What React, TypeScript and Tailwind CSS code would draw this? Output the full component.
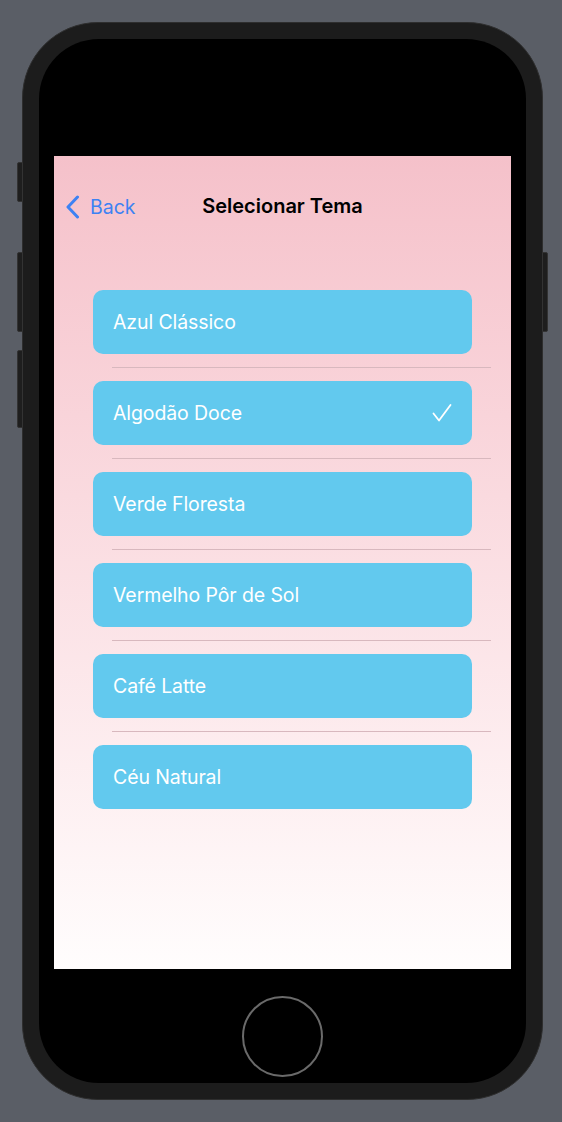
import React from "react";

const themes = [
  { name: "Azul Clássico", selected: false },
  { name: "Algodão Doce", selected: true },
  { name: "Verde Floresta", selected: false },
  { name: "Vermelho Pôr de Sol", selected: false },
  { name: "Café Latte", selected: false },
  { name: "Céu Natural", selected: false },
];

export default function App() {
  return (
    <div
      className="w-[562px] h-[1122px] bg-[#5a5e66] flex items-start justify-start pl-[22px] pt-[22px]"
      style={{ fontFamily: "Inter, 'Noto Sans', sans-serif" }}
    >
      <div className="relative w-[521px] h-[1078px]">
        {/* side buttons */}
        <div className="absolute left-[-5px] top-[140px] w-[6px] h-[40px] rounded-l-[2px] bg-[#1e1e1e] border border-[#333]" />
        <div className="absolute left-[-5px] top-[230px] w-[6px] h-[80px] rounded-l-[2px] bg-[#1e1e1e] border border-[#333]" />
        <div className="absolute left-[-5px] top-[328px] w-[6px] h-[78px] rounded-l-[2px] bg-[#1e1e1e] border border-[#333]" />
        <div className="absolute right-[-5px] top-[230px] w-[6px] h-[80px] rounded-r-[2px] bg-[#1e1e1e] border border-[#333]" />
        <div className="w-full h-full rounded-[76px] bg-[#1c1c1c] border border-[#2e2e2e] p-[16px]">
          <div className="w-full h-full rounded-[60px] bg-black flex flex-col items-center pt-[117px]">
            <div className="w-[457px] h-[813px] bg-gradient-to-b from-[#f5c1ca] to-[#fffdfd] flex flex-col">
              {/* nav bar */}
              <div className="relative h-[103px] pt-[38px]">
                <div className="absolute left-[12px] top-[39px] flex items-center gap-[11px] text-[#3d82f3]">
                  <svg width="13" height="24" viewBox="0 0 13 24" fill="none">
                    <path d="M11.5 2 L2 12 L11.5 22" stroke="#3d82f3" strokeWidth="3" strokeLinecap="round" strokeLinejoin="round" />
                  </svg>
                  <span className="text-[19.5px] leading-[24px]">Back</span>
                </div>
                <div className="text-center text-[20px] leading-[24px] font-semibold text-black">
                  Selecionar Tema
                </div>
              </div>
              {/* list */}
              <div className="flex flex-col pt-[31px]">
                {themes.map((t, i) => (
                  <div key={t.name} className="flex flex-col">
                    <div className="pl-[39px] pr-[39px]">
                      <div className="h-[64px] rounded-[10px] bg-[#62c9ee] flex items-center justify-between pl-[20px] pr-[20px]">
                        <span className="text-white text-[19.5px] leading-[24px] tracking-[-0.1px]">{t.name}</span>
                        {t.selected && (
                          <svg width="20" height="20" viewBox="0 0 20 20" fill="none">
                            <path d="M1.5 10.5 L7 17.5 L18.5 2" stroke="white" strokeWidth="1.8" strokeLinecap="round" strokeLinejoin="round" />
                          </svg>
                        )}
                      </div>
                    </div>
                    {i < themes.length - 1 && (
                      <div className="h-[27px] flex items-center pl-[58px] pr-[20px]">
                        <div className="h-px w-full bg-[#d8b8be]" />
                      </div>
                    )}
                  </div>
                ))}
              </div>
            </div>
            {/* home button */}
            <div className="mt-[27px] w-[81px] h-[81px] rounded-full border-2 border-[#6a6a6a]" />
          </div>
        </div>
      </div>
    </div>
  );
}
